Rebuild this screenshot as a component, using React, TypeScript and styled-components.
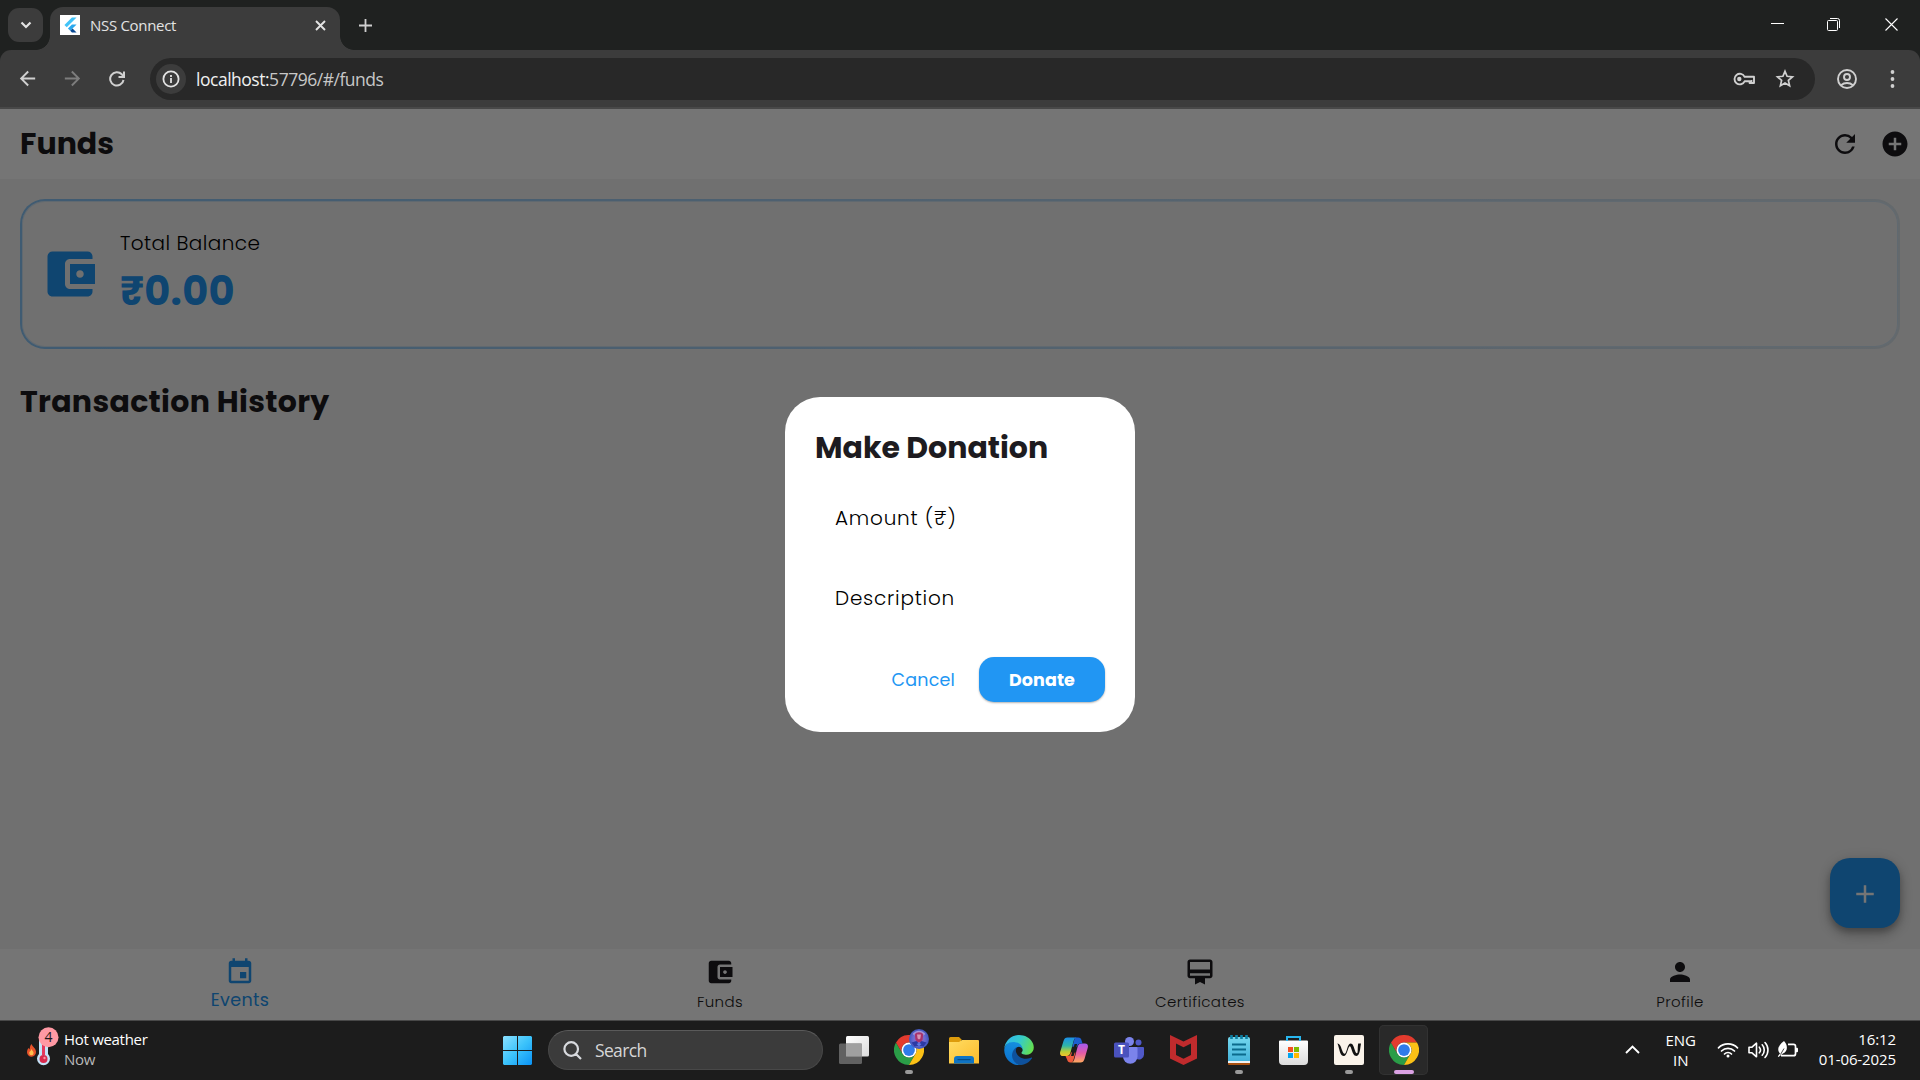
import React from 'react';
import styled, { createGlobalStyle, css } from 'styled-components';

const APP_FONT = `Poppins, Inter, "Open Sans", sans-serif`;
const SYSTEM_FONT = `"Segoe UI", "Open Sans", "Noto Sans", sans-serif`;

const GlobalStyle = createGlobalStyle`
  *, *::before, *::after { box-sizing: border-box; }
  html, body { margin: 0; padding: 0; background: #1c1c1c; overflow: hidden; }
  svg { display: block; flex: none; }
  button { border: 0; margin: 0; padding: 0; background: none; color: inherit; font: inherit; }
`;

const Screen = styled.div`
  display: flex;
  flex-direction: column;
  width: 1920px;
  height: 1080px;
  font-family: ${SYSTEM_FONT};
`;

/* ---------- Browser chrome ---------- */

const TabStrip = styled.div`
  display: flex;
  align-items: center;
  height: 50px;
  padding-left: 8px;
  background: #1f2120;
`;

const TabSearchButton = styled.button`
  display: grid;
  place-items: center;
  width: 35px;
  height: 34px;
  margin-right: 7px;
  border-radius: 11px;
  background: #3c3c3c;
`;

const Tab = styled.div`
  position: relative;
  display: flex;
  align-items: center;
  align-self: flex-end;
  width: 290px;
  height: 43px;
  padding: 0 14px 7px 10px;
  border-radius: 13px 13px 0 0;
  background: #3c3c3c;
  color: #e3e3e3;

  &::before, &::after {
    content: '';
    position: absolute;
    bottom: 0;
    width: 14px;
    height: 14px;
  }
  &::before { left: -14px; background: radial-gradient(circle at 0 0, transparent 13.5px, #3c3c3c 14.2px); }
  &::after { right: -14px; background: radial-gradient(circle at 100% 0, transparent 13.5px, #3c3c3c 14.2px); }
`;

const Favicon = styled.div`
  display: grid;
  place-items: center;
  width: 20px;
  height: 20px;
  margin-right: 10px;
  background: #fff;
`;

const TabTitle = styled.span`
  flex: 1;
  font-size: 15px;
  line-height: 20px;
  letter-spacing: -0.3px;
`;

const NewTabButton = styled.button`
  display: grid;
  place-items: center;
  width: 34px;
  height: 34px;
  margin-left: 8px;
`;

const WindowControls = styled.div`
  display: flex;
  align-self: stretch;
  margin-left: auto;
`;

const WindowButton = styled.button`
  display: grid;
  place-items: center;
  width: 57px;
  padding-bottom: 1px;
`;

const ToolbarBack = styled.div`
  background: #1f2120;
`;

const Toolbar = styled.div`
  display: flex;
  align-items: center;
  height: 59px;
  padding: 0 18px 0 16px;
  border-radius: 11px 11px 0 0;
  border-bottom: 2px solid #484848;
  background: #3c3c3c;
`;

const NavButton = styled.button<{ $dim?: boolean }>`
  display: grid;
  place-items: center;
  width: 21px;
  height: 34px;
  margin-right: 24px;
  color: ${p => (p.$dim ? '#7d7d7d' : '#d0d0d0')};
`;

const AddressBar = styled.div`
  display: flex;
  align-items: center;
  flex: 1;
  height: 42px;
  padding: 0 20px 0 6px;
  margin-top: 1px;
  margin-left: -1px;
  border-radius: 21px;
  background: #282828;
`;

const SiteInfo = styled.div`
  display: grid;
  place-items: center;
  width: 30px;
  height: 30px;
  margin-right: 10px;
  border-radius: 50%;
  background: #3c3c3c;
`;

const Url = styled.span`
  flex: 1;
  font-size: 17.5px;
  line-height: 24px;
  letter-spacing: -0.48px;
  color: #c7c7c7;
  b { font-weight: 400; color: #f0f0f0; }
`;

const AddressActions = styled.div`
  display: flex;
  align-items: center;
  gap: 19px;
`;

const ToolbarEnd = styled.div`
  display: flex;
  align-items: center;
  gap: 33px;
  margin-left: 22px;
  padding-right: 7px;
`;

/* ---------- App page ---------- */

const Page = styled.main`
  position: relative;
  display: flex;
  flex-direction: column;
  height: 911px;
  background: #f4f4f4;
  font-family: ${APP_FONT};
  color: #1d1b20;
`;

const AppBar = styled.header`
  display: flex;
  align-items: center;
  justify-content: space-between;
  height: 70px;
  padding: 0 10px 0 20px;
  background: #fefefe;
`;

const heading = css`
  margin: 0;
  font-size: 30px;
  font-weight: 700;
  line-height: 45px;
`;

const AppTitle = styled.h1`
  ${heading}
  padding-bottom: 2px;
`;

const AppActions = styled.div`
  display: flex;
  gap: 20px;
`;

const Body = styled.section`
  flex: 1;
  padding: 20px;
`;

const BalanceCard = styled.div`
  display: flex;
  align-items: center;
  gap: 20px;
  height: 150px;
  padding: 0 18px;
  border: 2px solid transparent;
  border-radius: 25px;
  background:
    linear-gradient(#f4f4f4, #f4f4f4) padding-box,
    linear-gradient(90deg, #8ac6f8, #d9e4ec) border-box;
  box-shadow: inset 0 0 0 1px rgba(160, 208, 245, 0.4);
`;

const BalanceText = styled.div`
  display: flex;
  flex-direction: column;
  gap: 3px;
`;

const BalanceLabel = styled.span`
  font-size: 20px;
  font-weight: 300;
  line-height: 30px;
  letter-spacing: 0.42px;
  color: #000;
`;

const BalanceAmount = styled.span`
  font-size: 40px;
  font-weight: 700;
  line-height: 60px;
  letter-spacing: 0.3px;
  color: #2196f3;
`;

const SectionTitle = styled.h2`
  ${heading}
  margin-top: 30px;
  letter-spacing: 0.31px;
`;

const Fab = styled.button`
  position: absolute;
  right: 20px;
  bottom: 92px;
  display: grid;
  place-items: center;
  width: 70px;
  height: 70px;
  padding-top: 2px;
  border-radius: 20px;
  background: #2196f3;
  color: #fff;
  box-shadow: 0 4px 6px rgba(0, 0, 0, 0.22), 0 7px 13px rgba(0, 0, 0, 0.16), 0 2px 18px rgba(0, 0, 0, 0.1);
`;

const BottomNav = styled.nav`
  display: grid;
  grid-template-columns: repeat(4, 1fr);
  height: 71px;
  background: #fefefe;
`;

const NavItem = styled.div<{ $active?: boolean }>`
  display: flex;
  flex-direction: column;
  align-items: center;
  padding-top: 8px;
  color: ${p => (p.$active ? '#2196f3' : '#1d1b20')};
`;

const NavLabel = styled.span<{ $active?: boolean }>`
  margin-top: ${p => (p.$active ? 1 : 3)}px;
  font-size: ${p => (p.$active ? 17.5 : 15)}px;
  font-weight: ${p => (p.$active ? 400 : 300)};
  line-height: 24px;
  letter-spacing: ${p => (p.$active ? 0.36 : 0.4)}px;
  color: ${p => (p.$active ? '#2196f3' : '#1d1b20')};
`;

const Scrim = styled.div`
  position: absolute;
  inset: 0;
  display: grid;
  place-items: center;
  background: rgba(0, 0, 0, 0.54);
`;

const Dialog = styled.div`
  display: flex;
  flex-direction: column;
  width: 350px;
  height: 335px;
  padding: 29px 30px 30px;
  border-radius: 35px;
  background: #fff;
`;

const DialogTitle = styled.h2`
  ${heading}
  line-height: 43px;
  margin-bottom: 19px;
`;

const Field = styled.div`
  height: 80px;
  padding-left: 20px;
  font-size: 20px;
  font-weight: 300;
  line-height: 60px;
  letter-spacing: 0.77px;
  color: #000;
`;

const DialogActions = styled.div`
  display: flex;
  justify-content: flex-end;
  align-items: center;
  margin-top: auto;
  gap: 10px;
`;

const TextButton = styled.button`
  height: 45px;
  padding: 0 14px 0 15px;
  font-size: 17.5px;
  letter-spacing: 0.18px;
  color: #2196f3;
`;

const FilledButton = styled.button`
  width: 126px;
  height: 45px;
  border-radius: 15px;
  background: #2196f3;
  color: #fff;
  font-size: 17.5px;
  font-weight: 700;
  letter-spacing: 0.1px;
  box-shadow: 0 1px 2px rgba(0, 0, 0, 0.3);
`;

/* ---------- Taskbar ---------- */

const Taskbar = styled.footer`
  display: flex;
  height: 60px;
  border-top: 1px solid #484848;
  background: #1c1c1c;
  color: #fff;
`;

const Weather = styled.div`
  display: flex;
  align-items: center;
  gap: 3px;
  width: 490px;
  padding: 0 0 3px 24px;
`;

const WeatherText = styled.div`
  display: flex;
  flex-direction: column;
  padding-bottom: 1px;
  font-size: 15px;
  line-height: 20px;
  letter-spacing: -0.3px;
  span { color: #b8b8b8; }
`;

const Slot = styled.div<{ $active?: boolean }>`
  position: relative;
  display: grid;
  place-items: center;
  width: 49px;
  height: 50px;
  margin: 4px 3px;
  border-radius: 5px;
  ${p => p.$active && css`
    background: #292929;
    box-shadow: inset 0 0 0 1px #323232;
  `}
`;

const Running = styled.i<{ $active?: boolean }>`
  position: absolute;
  left: 50%;
  bottom: 1px;
  width: ${p => (p.$active ? 20 : 8)}px;
  height: 4px;
  border-radius: 2px;
  background: ${p => (p.$active ? '#dba2e4' : '#9a9a9a')};
  transform: translateX(-50%);
`;

const SearchBox = styled.div`
  display: flex;
  align-items: center;
  gap: 13px;
  width: 275px;
  height: 40px;
  margin: 9px 3px 0 3px;
  padding-left: 14px;
  border: 1px solid #484848;
  border-top-color: #5a5a5a;
  border-radius: 20px;
  background: #3b3b3b;
  font-size: 17.5px;
  letter-spacing: -0.65px;
  color: #d6d6d6;
`;

const Tray = styled.div`
  display: flex;
  align-items: center;
  margin-left: auto;
  padding: 0 24px 2px 0;
`;

const Language = styled.div`
  display: flex;
  flex-direction: column;
  align-items: center;
  width: 36px;
  margin: 0 18px 0 23px;
  font-size: 15px;
  line-height: 20px;
`;

const StatusIcons = styled.div`
  display: flex;
  align-items: center;
  gap: 8px;
`;

const Clock = styled.div`
  display: flex;
  flex-direction: column;
  align-items: flex-end;
  margin-left: 20px;
  padding-bottom: 2px;
  font-size: 15px;
  line-height: 20px;
  letter-spacing: -0.1px;
`;

/* ---------- Icons ---------- */

const icons = {
  refresh: 'M17.65 6.35A7.958 7.958 0 0 0 12 4c-4.42 0-7.99 3.58-7.99 8s3.57 8 7.99 8c3.73 0 6.84-2.55 7.73-6h-2.08A5.99 5.99 0 0 1 12 18c-3.31 0-6-2.69-6-6s2.69-6 6-6c1.66 0 3.14.69 4.22 1.78L13 11h7V4l-2.35 2.35z',
  addCircle: 'M12 2C6.48 2 2 6.48 2 12s4.48 10 10 10 10-4.48 10-10S17.52 2 12 2zm5 11h-4v4h-2v-4H7v-2h4V7h2v4h4v2z',
  wallet: 'M21 18v1c0 1.1-.9 2-2 2H5c-1.11 0-2-.9-2-2V5c0-1.1.89-2 2-2h14c1.1 0 2 .9 2 2v1h-9c-1.11 0-2 .9-2 2v8c0 1.1.89 2 2 2h9zm-9-2h10V8H12v8zm4-2.5c-.83 0-1.5-.67-1.5-1.5s.67-1.5 1.5-1.5 1.5.67 1.5 1.5-.67 1.5-1.5 1.5z',
  event: 'M17 12h-5v5h5v-5zM16 1v2H8V1H6v2H5c-1.11 0-1.99.9-1.99 2L3 19c0 1.1.89 2 2 2h14c1.1 0 2-.9 2-2V5c0-1.1-.9-2-2-2h-1V1h-2zm3 18H5V8h14v11z',
  certificate: 'M20 2H4c-1.11 0-2 .89-2 2v11c0 1.11.89 2 2 2h4v5l4-2 4 2v-5h4c1.11 0 2-.89 2-2V4c0-1.11-.89-2-2-2zm0 13H4v-2h16v2zm0-5H4V4h16v6z',
  person: 'M12 12c2.21 0 4-1.79 4-4s-1.79-4-4-4-4 1.79-4 4 1.79 4 4 4zm0 2c-2.67 0-8 1.34-8 4v2h16v-2c0-2.66-5.33-4-8-4z',
  add: 'M19 13h-6v6h-2v-6H5v-2h6V5h2v6h6v2z',
  arrowBack: 'M20 11H7.83l5.59-5.59L12 4l-8 8 8 8 1.41-1.41L7.83 13H20v-2z',
};

const Icon = ({ name, size = 30, color = 'currentColor' }: { name: keyof typeof icons; size?: number; color?: string }) => (
  <svg width={size} height={size} viewBox="0 0 24 24" fill={color}><path d={icons[name]} /></svg>
);

const Stroke = ({ d, w, h, color = '#e3e3e3', sw = 2 }: { d: string; w: number; h: number; color?: string; sw?: number }) => (
  <svg width={w} height={h} viewBox={`0 0 ${w} ${h}`} fill="none" stroke={color} strokeWidth={sw}><path d={d} /></svg>
);

const FlutterLogo = () => (
  <svg width="15" height="16" viewBox="0 0 24 24">
    <path fill="#42c3f7" d="M14.3 0L2.3 12 6 15.7 21.7 0z" />
    <path fill="#2aa8ee" d="M14.3 11.1L7.9 17.5l3.7 3.7 10.1-10.1z" />
    <path fill="#0a4a94" d="M11.6 21.2l2.7 2.8h7.4l-6.4-6.5z" />
  </svg>
);

const ChromeLogo = () => (
  <svg width="30" height="30" viewBox="0 0 48 48">
    <path fill="#2a9d47" d="M3.2 12A24 24 0 0 0 24 48L34.4 30A12 12 0 0 1 13.6 30Z" />
    <path fill="#e33b2e" d="M3.2 12A24 24 0 0 1 44.8 12L24 12A12 12 0 0 0 13.6 30Z" />
    <path fill="#fbc116" d="M44.8 12A24 24 0 0 1 24 48L34.4 30A12 12 0 0 0 24 12Z" />
    <circle cx="24" cy="24" r="12" fill="#fff" />
    <circle cx="24" cy="24" r="9.4" fill="#2f7bea" />
  </svg>
);

const AvatarBadge = styled.svg`
  position: absolute;
  left: 25px;
  top: 4px;
`;

const ProfileAvatar = () => (
  <AvatarBadge width="20" height="20" viewBox="0 0 20 20">
    <defs>
      <radialGradient id="avatar"><stop offset="0" stopColor="#b765b8" /><stop offset=".6" stopColor="#6a6ad2" /><stop offset="1" stopColor="#3f55bc" /></radialGradient>
    </defs>
    <circle cx="10" cy="10" r="10" fill="url(#avatar)" />
    <path d="M3.500 5a8.200 8.200 0 0 1 13 0l-3 2h-7z" fill="#b9a5de" opacity=".75" />
    <path d="M5.800 5.500c1-3 7.400-3 8.400 0l-.7 5.500-2 2h-3l-2-2z" fill="#a8336c" />
    <path d="M8 5.500h4l-.6 4-1.400 1-1.400-1z" fill="#d795b4" />
    <path d="M2.500 13.500l5-1.500 2.500 2.500 2.500-2.500 5 1.500-3 4-4.500-1-4.500 1z" fill="#2c3aa4" />
    <path d="M7.500 15l2.500-1 2.500 1-2.500 2z" fill="#5f7fe6" />
  </AvatarBadge>
);

const WeatherIcon = () => (
  <svg width="37" height="44" viewBox="0 0 37 44">
    <path d="M7.500 17c1 3 4.500 4 4.500 8a4.500 4.500 0 0 1-9 .3c0-2 .8-3.300 1.500-4.300l1 1.500C6 20.500 6 18.500 7.500 17z" fill="#e8532b" />
    <path d="M7.600 22c.5 2 2 2.300 2 4a2.200 2.200 0 0 1-4.400 0c0-1.500 1.800-2 2.400-4z" fill="#ffc04d" />
    <path d="M15 14a4.500 4.500 0 0 1 9 0v13a6.500 6.500 0 1 1-9 0z" fill="#c5e3f8" />
    <path d="M18 14h3v14h-3z" fill="#e5395c" />
    <circle cx="19.500" cy="32" r="4" fill="#d92a4d" />
    <circle cx="20.500" cy="31" r="1.200" fill="#ff8fa3" />
    <circle cx="24.500" cy="10.200" r="10" fill="#ff99a4" />
    <text x="24.500" y="15.300" textAnchor="middle" fontSize="14" fontFamily="Open Sans" fill="#1a1a1a">4</text>
  </svg>
);

const WindowsLogo = () => (
  <svg width="29" height="29" viewBox="0 0 29 29">
    <defs><linearGradient id="win" x1="0" y1="0" x2="1" y2="1"><stop offset="0" stopColor="#8be0ff" /><stop offset=".5" stopColor="#3cc3fb" /><stop offset="1" stopColor="#0a92f5" /></linearGradient></defs>
    <path fill="url(#win)" d="M1 0h13v14H0V1zM15 0h13l1 1v13H15zM0 15h14v14H1l-1-1zM15 15h14v13l-1 1H15z" />
  </svg>
);

const TaskViewIcon = () => (
  <svg width="30" height="28" viewBox="0 0 30 28">
    <defs><linearGradient id="tv" x1="0" y1="0" x2="1" y2="1"><stop offset="0" stopColor="#fff" /><stop offset="1" stopColor="#dcdcdc" /></linearGradient></defs>
    <rect x="7" width="23" height="20.500" rx="1.500" fill="url(#tv)" />
    <rect y="7.500" width="23" height="20.500" rx="1.500" fill="#6b6b6b" opacity=".88" />
    <rect x="7" y="7.500" width="16" height="13" fill="#a0a0a0" />
  </svg>
);

const FolderIcon = () => (
  <svg width="30" height="27" viewBox="0 0 30 27">
    <defs><linearGradient id="fold" x1="0" y1="0" x2="1" y2="1"><stop offset="0" stopColor="#ffdc62" /><stop offset="1" stopColor="#fcbc2c" /></linearGradient></defs>
    <path d="M0 1.500A1.500 1.500 0 0 1 1.500 0H10l3 3h-1v5H0z" fill="#dd9c0c" />
    <path d="M0 5h10l3-2h16a1 1 0 0 1 1 1v22.500H0z" fill="url(#fold)" />
    <path d="M5 26.500V22a3 3 0 0 1 3-3h14a3 3 0 0 1 3 3v4.500z" fill="#0f74c4" />
    <path d="M8.500 22.600h13" stroke="#064c86" strokeWidth="1.200" />
  </svg>
);

const EdgeLogo = () => (
  <svg width="30" height="30" viewBox="0 0 256 260">
    <defs>
      <linearGradient id="edgeTop" x1="0" y1=".3" x2="1" y2=".6"><stop offset="0" stopColor="#2fb8ee" /><stop offset=".5" stopColor="#36cbc8" /><stop offset="1" stopColor="#66e04c" /></linearGradient>
      <linearGradient id="edgeSide" x1=".6" y1="0" x2=".4" y2="1"><stop offset="0" stopColor="#1590e0" /><stop offset="1" stopColor="#0c70cc" /></linearGradient>
    </defs>
    <path fill="#0e519c" d="M235.680 195.460a93.730 93.730 0 0 1-10.540 4.710 101.870 101.870 0 0 1-35.900 6.460c-47.320 0-88.540-32.550-88.540-74.320A31.480 31.480 0 0 1 117.130 105c-42.800 1.800-53.800 46.400-53.800 72.530 0 73.880 68.090 81.370 82.760 81.370 7.910 0 19.840-2.300 27-4.560l1.310-.44a128.340 128.340 0 0 0 66.600-52.800 4 4 0 0 0-5.320-5.640z" />
    <path fill="url(#edgeSide)" d="M105.730 246.420A79.200 79.200 0 0 1 83 225.080a80.720 80.720 0 0 1 29.500-120c3.120-1.470 8.450-4.130 15.540-4a32.350 32.350 0 0 1 25.690 13 31.880 31.880 0 0 1 6.360 18.660c0-.21 24.460-79.600-80-79.600-43.900 0-80 41.660-80 78.210a130.150 130.150 0 0 0 12.110 56 128 128 0 0 0 156.380 67.110 75.550 75.550 0 0 1-62.780-8z" />
    <path fill="url(#edgeTop)" d="M152.330 148.860c-.81 1.050-3.300 2.500-3.300 5.660 0 2.610 1.700 5.120 4.720 7.230 14.380 10 41.490 8.680 41.560 8.680a59.560 59.560 0 0 0 30.270-8.350A61.380 61.380 0 0 0 256 109.230C256.260 86.850 248 71.970 244.660 65.370 223.450 23.900 177.720 0 128 0A128 128 0 0 0 0 126.200c.48-36.540 36.800-66.050 80-66.050 3.500 0 23.460.34 42 10.070 16.340 8.580 24.900 18.940 30.850 29.210 6.180 10.670 7.280 24.150 7.280 29.520 0 5.370-2.740 13.330-7.800 19.910z" />
  </svg>
);

const CopilotLogo = () => (
  <svg width="28" height="26" viewBox="0 0 28 26">
    <defs>
      <linearGradient id="cpL" x1="0" y1="0" x2="0" y2="1"><stop offset="0" stopColor="#1b8fe8" /><stop offset=".45" stopColor="#2fb5a8" /><stop offset=".75" stopColor="#b5cf3a" /><stop offset="1" stopColor="#f5c528" /></linearGradient>
      <linearGradient id="cpR" x1="0" y1="0" x2="0" y2="1"><stop offset="0" stopColor="#a35af0" /><stop offset=".5" stopColor="#e35aa8" /><stop offset="1" stopColor="#ffa95e" /></linearGradient>
      <mask id="cpGap"><rect width="28" height="26" fill="#fff" /><path d="M14.600 7h2.600l-3.600 12h-2.600z" fill="#000" /></mask>
    </defs>
    <g mask="url(#cpGap)">
      <path d="M7.500 .5H17c-2 0-2.800 1.500-3.400 3.500l-3 11c-.7 2.600-1.700 4-4 4H3c-2.600 0-3.500-2-2.700-4.500L3.500 4C4.300 1.500 5.300 .5 7.500 .5z" fill="url(#cpL)" />
      <path d="M20.500 25.500H11c2 0 2.800-1.500 3.400-3.500l3-11.500c.7-2.600 1.700-4 4-4H25c2.600 0 3.500 2 2.700 4.500L24.500 22c-.8 2.500-1.800 3.500-4 3.500z" fill="url(#cpR)" />
      <path d="M15 .5h3.200c2 0 2.800 1 3.300 2.800l1 3.200h-2c-1.800 0-2.700 1-3.400 3.200h-4.900z" fill="#1c5fd0" />
      <path d="M5.500 19H8c1.600 0 2.300-1 3-3.500h4.500l-2.200 8c-.5 1.400-1.200 2-2.600 2h-.4c-1.800 0-2.600-1-3.100-2.800z" fill="#ee5a3c" />
    </g>
  </svg>
);

const TeamsLogo = () => (
  <svg width="30" height="27" viewBox="0 0 30 27">
    <circle cx="24.500" cy="5.500" r="3" fill="#5059c9" />
    <path d="M20 10h9a1 1 0 0 1 1 1v6.500a5 5 0 0 1-8 4z" fill="#5059c9" />
    <circle cx="15.500" cy="4.500" r="4.500" fill="#7b83eb" />
    <path d="M9 10h13.500a1 1 0 0 1 1 1v8.500a7 7 0 0 1-14.500 0z" fill="#7b83eb" />
    <rect y="5.500" width="15" height="15" rx="1.500" fill="#4a52bd" />
    <text x="7.500" y="17.300" textAnchor="middle" fontSize="12" fontWeight="700" fontFamily="Open Sans" fill="#fff">T</text>
  </svg>
);

const McAfeeLogo = () => (
  <svg width="27" height="30" viewBox="0 0 27 30">
    <path fill="#c02b2d" fillRule="evenodd" d="M0 0l13.500 6.500L27 0v23.500L13.500 30 0 23.500zM6 8.500v11.500l7.500 3.800L21 20V8.500l-7.500 3.700z" />
  </svg>
);

const NotepadIcon = () => (
  <svg width="22" height="30" viewBox="0 0 22 30">
    <defs><linearGradient id="note" x1="0" y1="0" x2="0" y2="1"><stop offset="0" stopColor="#74d7ee" /><stop offset="1" stopColor="#44b3da" /></linearGradient></defs>
    <path d="M0 26h22v3a1 1 0 0 1-1 1H1a1 1 0 0 1-1-1z" fill="#a9500f" />
    <path d="M0 24h22v4H0z" fill="#f1f1f1" />
    <path d="M0 4a2 2 0 0 1 2-2h18a2 2 0 0 1 2 2v22H0z" fill="url(#note)" />
    <path d="M4 9.500h14M4 14.500h14M4 19.500h14" stroke="#0b6a8c" strokeWidth="1.800" />
    <path d="M3.500 0v4M8.500 0v4M13.500 0v4M18.500 0v4" stroke="#0d7fa3" strokeWidth="2.600" />
  </svg>
);

const StoreIcon = () => (
  <svg width="29" height="29" viewBox="0 0 29 29">
    <defs><linearGradient id="store" x1="0" y1="0" x2="0" y2="1"><stop offset="0" stopColor="#fff" /><stop offset="1" stopColor="#dcdcdc" /></linearGradient></defs>
    <path d="M8 7V1h13v6" fill="none" stroke="#28b6ee" strokeWidth="2" />
    <path d="M1 4.500h27a1 1 0 0 1 1 1V25a4 4 0 0 1-4 4H4a4 4 0 0 1-4-4V5.500a1 1 0 0 1 1-1z" fill="url(#store)" />
    <path d="M8 5V3M21 5V3" stroke="#28b6ee" strokeWidth="2" />
    <path d="M9 11h5v5H9z" fill="#f25022" /><path d="M15 11h5v5h-5z" fill="#7fba00" />
    <path d="M9 17h5v5H9z" fill="#00a4ef" /><path d="M15 17h5v5h-5z" fill="#ffb900" />
  </svg>
);

const WaveLogo = () => (
  <svg width="30" height="30" viewBox="0 0 30 30">
    <rect width="30" height="30" rx="2" fill="#faf3ea" />
    <path
      fill="#111"
      d="M3.300 8.500c3 .5 3.700 3.500 4.700 6.500.8 2.300 1.700 4 2.800 3.800 2-.5 2.300-9.800 5.700-10.300 2.600 0 3.300 3.500 4.500 7 .6 1.800 1.200 3 2 2.800 1.300-.6.300-5.300 1.200-9.800H27c-.8 4-1 12.300-4.500 12.500-2.800 0-4-3.500-5.100-7-.5-1.700-1-3-1.700-2.800-1.900.6-2.300 9.800-6 9.800-3 0-3.700-4-4.700-7.500-.6-2.200-.7-3.500-1.700-5z"
    />
  </svg>
);

const KeyIcon = () => (
  <svg width="23" height="14" viewBox="0 0 23 14" fill="none" stroke="#d0d0d0" strokeWidth="1.900">
    <path d="M11.600 4.800h9.400v6.200h-4.400V9.300h-5A5.300 5.300 0 1 1 11.600 4.800zM18.400 8v3" strokeLinejoin="round" />
    <circle cx="6.300" cy="7" r="2.200" fill="#d0d0d0" stroke="none" />
  </svg>
);

const ProfileIcon = () => (
  <svg width="20" height="20" viewBox="0 0 20 20" fill="none" stroke="#d0d0d0" strokeWidth="1.900">
    <circle cx="10" cy="10" r="9" /><circle cx="10" cy="8" r="3" /><path d="M4 16.300c3.500-3 8.500-3 12 0" />
  </svg>
);

const WifiIcon = () => (
  <svg width="22" height="18" viewBox="0 0 22 18" fill="none" stroke="#fff" strokeWidth="1.700" strokeLinecap="round">
    <path d="M1.500 6.800a13.400 13.400 0 0 1 19 0M4.500 10a9.200 9.200 0 0 1 13 0M7.500 13a5 5 0 0 1 7 0" />
    <circle cx="11" cy="15" r="1.500" fill="#fff" stroke="none" />
  </svg>
);

const SpeakerIcon = () => (
  <svg width="22" height="18" viewBox="0 0 22 18" fill="none" stroke="#fff" strokeWidth="1.600" strokeLinecap="round" strokeLinejoin="round">
    <path d="M2 6.200h3l4.500-4v13.600l-4.500-4H2zM12.300 6.200a4.300 4.300 0 0 1 0 5.600M15.200 3.800a7.600 7.600 0 0 1 0 10.400M18 1.500a11 11 0 0 1 0 15" />
  </svg>
);

const BatteryIcon = () => (
  <svg width="22" height="18" viewBox="0 0 22 18">
    <path d="M11 3.300h5.500a2 2 0 0 1 2 2v7.400a2 2 0 0 1-2 2H4" fill="none" stroke="#fff" strokeWidth="1.700" />
    <path d="M19 6.800h1a1 1 0 0 1 1 1v2.400a1 1 0 0 1-1 1h-1z" fill="#fff" />
    <path d="M7 0c3.500 3.500 4.500 10-1 12.500L1.500 16l-.7-.8L3 12.500C-.5 9 1.500 4 7 0z" fill="#fff" />
    <path d="M3.500 13.500L7 7.500" stroke="#1c1c1c" strokeWidth=".8" />
  </svg>
);

/* ---------- Composition ---------- */

const navItems: { label: string; icon: keyof typeof icons; active?: boolean }[] = [
  { label: 'Events', icon: 'event', active: true },
  { label: 'Funds', icon: 'wallet' },
  { label: 'Certificates', icon: 'certificate' },
  { label: 'Profile', icon: 'person' },
];

const taskbarApps: { id: string; icon: React.ReactNode; running?: boolean; active?: boolean }[] = [
  { id: 'tasks', icon: <TaskViewIcon /> },
  { id: 'chrome-profile', icon: <><ChromeLogo /><ProfileAvatar /></>, running: true },
  { id: 'files', icon: <FolderIcon /> },
  { id: 'edge', icon: <EdgeLogo /> },
  { id: 'copilot', icon: <CopilotLogo /> },
  { id: 'teams', icon: <TeamsLogo /> },
  { id: 'mcafee', icon: <McAfeeLogo /> },
  { id: 'notepad', icon: <NotepadIcon />, running: true },
  { id: 'store', icon: <StoreIcon /> },
  { id: 'wave', icon: <WaveLogo />, running: true },
  { id: 'chrome', icon: <ChromeLogo />, running: true, active: true },
];

const BrowserChrome = () => (
  <>
    <TabStrip>
      <TabSearchButton><Stroke w={12} h={8} d="M1.500 1.500L6 6l4.500-4.500" sw={2.200} /></TabSearchButton>
      <Tab>
        <Favicon><FlutterLogo /></Favicon>
        <TabTitle>NSS Connect</TabTitle>
        <Stroke w={11} h={11} d="M1 1l9 9M10 1l-9 9" sw={1.900} />
      </Tab>
      <NewTabButton><Stroke w={13} h={13} d="M6.500 0v13M0 6.500h13" color="#cfcfcf" sw={1.800} /></NewTabButton>
      <WindowControls>
        <WindowButton><Stroke w={13} h={3} d="M0 .5h13" color="#fff" sw={1} /></WindowButton>
        <WindowButton>
          <svg width="15" height="14" viewBox="0 0 15 14" fill="none" stroke="#fff"><rect x=".5" y="2.500" width="10" height="10" rx="1" /><path d="M3 .5h7.500a2 2 0 0 1 2 2V10" /></svg>
        </WindowButton>
        <WindowButton><Stroke w={13} h={13} d="M.5.5l12 12M12.500.5l-12 12" color="#fff" sw={1.100} /></WindowButton>
      </WindowControls>
    </TabStrip>
    <ToolbarBack>
      <Toolbar>
        <NavButton><Icon name="arrowBack" size={23} /></NavButton>
        <NavButton $dim><svg width="23" height="23" viewBox="0 0 24 24" fill="currentColor"><path d={icons.arrowBack} transform="matrix(-1 0 0 1 24 0)" /></svg></NavButton>
        <NavButton>
          <svg width="16" height="16" viewBox="0 0 16 16" fill="none" stroke="currentColor" strokeWidth="2"><path d="M14.500 9A6.700 6.700 0 1 1 12.800 3.300L14.300 5.500M15 .5v5.500H9.500" /></svg>
        </NavButton>
        <AddressBar>
          <SiteInfo>
            <svg width="18" height="18" viewBox="0 0 18 18" fill="none" stroke="#e3e3e3" strokeWidth="1.800"><circle cx="9" cy="9" r="7.600" /><path d="M9 8v5M9 5v1.900" /></svg>
          </SiteInfo>
          <Url><b>localhost:</b>57796/#/funds</Url>
          <AddressActions>
            <KeyIcon />
            <Stroke w={20} h={20} d="M10 2.300l2.100 5 5.400.5-4.100 3.600 1.200 5.300-4.600-2.800-4.600 2.800 1.200-5.300-4.100-3.600 5.400-.5z" color="#d0d0d0" sw={1.700} />
          </AddressActions>
        </AddressBar>
        <ToolbarEnd>
          <ProfileIcon />
          <svg width="5" height="18" viewBox="0 0 5 18" fill="#d0d0d0"><circle cx="2.500" cy="2" r="1.900" /><circle cx="2.500" cy="9" r="1.900" /><circle cx="2.500" cy="16" r="1.900" /></svg>
        </ToolbarEnd>
      </Toolbar>
    </ToolbarBack>
  </>
);

const FundsPage = () => (
  <Page>
    <AppBar>
      <AppTitle>Funds</AppTitle>
      <AppActions><Icon name="refresh" /><Icon name="addCircle" /></AppActions>
    </AppBar>
    <Body>
      <BalanceCard>
        <Icon name="wallet" size={60} color="#2196f3" />
        <BalanceText>
          <BalanceLabel>Total Balance</BalanceLabel>
          <BalanceAmount>₹0.00</BalanceAmount>
        </BalanceText>
      </BalanceCard>
      <SectionTitle>Transaction History</SectionTitle>
    </Body>
    <BottomNav>
      {navItems.map(item => (
        <NavItem key={item.label} $active={item.active}>
          <Icon name={item.icon} />
          <NavLabel $active={item.active}>{item.label}</NavLabel>
        </NavItem>
      ))}
    </BottomNav>
    <Fab><Icon name="add" /></Fab>
    <Scrim>
      <Dialog role="dialog">
        <DialogTitle>Make Donation</DialogTitle>
        <Field>Amount (₹)</Field>
        <Field>Description</Field>
        <DialogActions>
          <TextButton>Cancel</TextButton>
          <FilledButton>Donate</FilledButton>
        </DialogActions>
      </Dialog>
    </Scrim>
  </Page>
);

const WindowsTaskbar = () => (
  <Taskbar>
    <Weather>
      <WeatherIcon />
      <WeatherText>Hot weather<span>Now</span></WeatherText>
    </Weather>
    <Slot><WindowsLogo /></Slot>
    <SearchBox>
      <Stroke w={19} h={19} d="M15 8A6.800 6.800 0 1 1 1.400 8a6.800 6.800 0 0 1 13.600 0zM13 13l5 5" color="#d8dade" sw={2.200} />
      Search
    </SearchBox>
    {taskbarApps.map(app => (
      <Slot key={app.id} $active={app.active}>
        {app.icon}
        {app.running && <Running $active={app.active} />}
      </Slot>
    ))}
    <Tray>
      <Stroke w={15} h={9} d="M1 8l6.500-6.500L14 8" color="#fff" sw={1.900} />
      <Language><span>ENG</span><span>IN</span></Language>
      <StatusIcons><WifiIcon /><SpeakerIcon /><BatteryIcon /></StatusIcons>
      <Clock><span>16:12</span><span>01-06-2025</span></Clock>
    </Tray>
  </Taskbar>
);

export default function App() {
  return (
    <Screen>
      <GlobalStyle />
      <BrowserChrome />
      <FundsPage />
      <WindowsTaskbar />
    </Screen>
  );
}
